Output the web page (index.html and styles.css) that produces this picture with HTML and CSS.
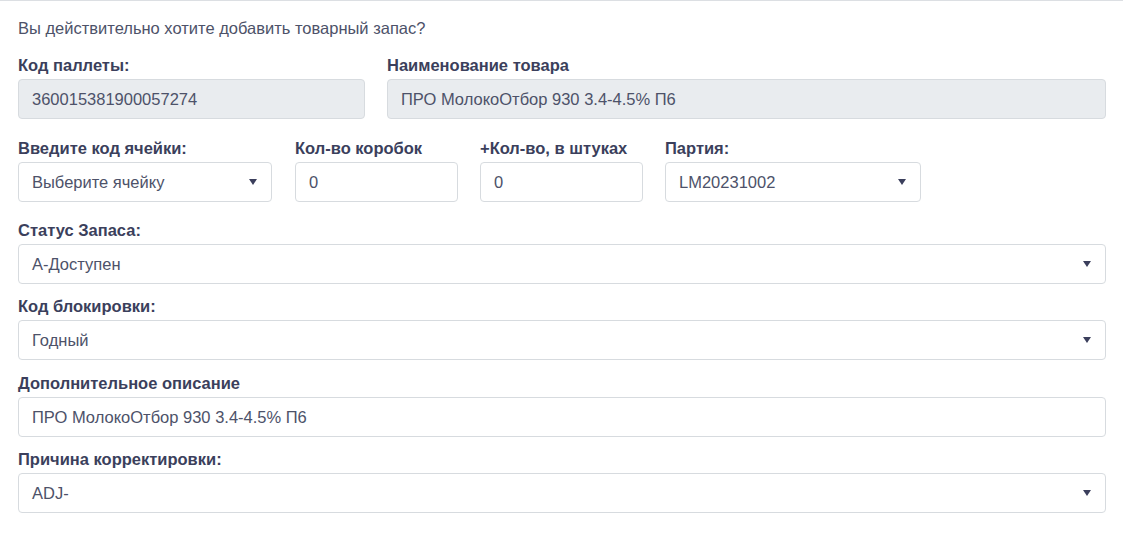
FILE: index.html
```html
<!DOCTYPE html>
<html lang="ru">
<head>
<meta charset="utf-8">
<link rel="stylesheet" href="styles.css">
</head>
<body>
<div class="modal-body">
  <p class="question">Вы действительно хотите добавить товарный запас?</p>
  <div class="row row-1">
    <div class="field">
      <label class="lbl">Код паллеты:</label>
      <div class="ctrl disabled">360015381900057274</div>
    </div>
    <div class="field">
      <label class="lbl">Наименование товара</label>
      <div class="ctrl disabled">ПРО МолокоОтбор 930 3.4-4.5% П6</div>
    </div>
  </div>
  <div class="row row-2">
    <div class="field">
      <label class="lbl">Введите код ячейки:</label>
      <div class="ctrl select"><span>Выберите ячейку</span><span class="caret"></span></div>
    </div>
    <div class="field">
      <label class="lbl">Кол-во коробок</label>
      <div class="ctrl">0</div>
    </div>
    <div class="field">
      <label class="lbl">+Кол-во, в штуках</label>
      <div class="ctrl">0</div>
    </div>
    <div class="field">
      <label class="lbl">Партия:</label>
      <div class="ctrl select"><span>LM20231002</span><span class="caret"></span></div>
    </div>
  </div>
  <div class="field full">
    <label class="lbl">Статус Запаса:</label>
    <div class="ctrl select"><span>А-Доступен</span><span class="caret"></span></div>
  </div>
  <div class="field full wide-gap">
    <label class="lbl">Код блокировки:</label>
    <div class="ctrl select"><span>Годный</span><span class="caret"></span></div>
  </div>
  <div class="field full">
    <label class="lbl">Дополнительное описание</label>
    <div class="ctrl">ПРО МолокоОтбор 930 3.4-4.5% П6</div>
  </div>
  <div class="field full">
    <label class="lbl">Причина корректировки:</label>
    <div class="ctrl select"><span>ADJ-</span><span class="caret"></span></div>
  </div>
</div>
</body>
</html>
```
FILE: styles.css
```css
html, body {
  margin: 0;
  padding: 0;
  background: #fff;
}
body {
  font-family: "Liberation Sans", Arial, sans-serif;
  color: #4d5269;
}
.modal-body {
  border-top: 1px solid #dcdfe3;
  padding: 17px 17px 0 18px;
}
.question {
  margin: 0 0 17px 0;
  font-size: 16.5px;
  line-height: 20px;
  color: #4d5269;
}
.row {
  display: flex;
}
.row-1 {
  gap: 22px;
  margin-bottom: 19px;
}
.row-1 .field:first-child { width: 347px; }
.row-1 .field:last-child { flex: 1; }
.row-2 {
  gap: 22px;
  margin-bottom: 18px;
}
.row-2 .field:nth-child(1) { width: 254px; margin-right: 1px; }
.row-2 .field:nth-child(2) { width: 163px; }
.row-2 .field:nth-child(3) { width: 163px; }
.row-2 .field:nth-child(4) { width: 256px; }
.field {
  display: flex;
  flex-direction: column;
}
.full {
  margin-bottom: 12px;
}
.full.wide-gap {
  margin-bottom: 13px;
}
.lbl {
  font-weight: bold;
  font-size: 16.5px;
  line-height: 20px;
  color: #3b3f5c;
  margin-bottom: 4px;
  white-space: nowrap;
}
.ctrl {
  box-sizing: border-box;
  height: 40px;
  border: 1px solid #d7dbdf;
  border-radius: 4px;
  padding: 0 13px;
  display: flex;
  align-items: center;
  font-size: 16.5px;
  color: #4d5269;
  background: #fff;
  white-space: nowrap;
}
.ctrl.disabled {
  background: #e9ecef;
}
.select {
  justify-content: space-between;
  padding-right: 14px;
}
.caret {
  width: 0;
  height: 0;
  border-left: 4px solid transparent;
  border-right: 4px solid transparent;
  border-top: 6px solid #3b3f5c;
}
```
